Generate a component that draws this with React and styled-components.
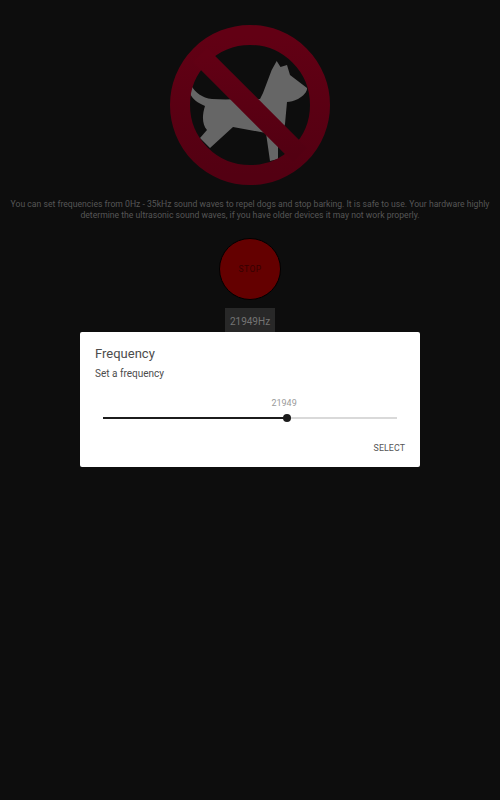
import React from "react";
import styled, { createGlobalStyle } from "styled-components";

const GlobalStyle = createGlobalStyle`
  html, body {
    margin: 0;
    padding: 0;
    background: #0d0d0d;
    font-family: Roboto, "Liberation Sans", sans-serif;
  }
`;

const Screen = styled.div`
  position: relative;
  width: 500px;
  height: 800px;
  overflow: hidden;
  background: #0d0d0d;
  display: flex;
  flex-direction: column;
  align-items: center;
  padding-top: 25px;
  box-sizing: border-box;
`;

const Logo = styled.svg`
  display: block;
  width: 160px;
  height: 160px;
`;

const Description = styled.p`
  margin: 14px 0 0;
  padding: 0 8px;
  font-size: 8.65px;
  line-height: 10.5px;
  text-align: center;
  color: #565656;
`;

const StopButton = styled.button`
  margin-top: 18px;
  width: 62px;
  height: 62px;
  padding: 0;
  border: 1.5px solid #000;
  border-radius: 50%;
  background: #640000;
  color: #340000;
  font-family: inherit;
  font-size: 8.5px;
  letter-spacing: 0.4px;
`;

const HzLabel = styled.div`
  margin-top: 8px;
  width: 50px;
  height: 30px;
  padding-top: 8px;
  box-sizing: border-box;
  background: #282828;
  color: #747474;
  font-size: 10px;
  line-height: 12px;
  text-align: center;
`;

const Dialog = styled.div`
  position: absolute;
  left: 80px;
  top: 332px;
  width: 340px;
  height: 135px;
  padding: 14px 15px 0;
  box-sizing: border-box;
  background: #fff;
  border-radius: 2px;
  display: flex;
  flex-direction: column;
`;

const Title = styled.h2`
  margin: 0;
  font-size: 13px;
  line-height: 15px;
  font-weight: 400;
  color: #4c4c4c;
`;

const Subtitle = styled.p`
  margin: 7px 0 0;
  font-size: 10px;
  line-height: 12px;
  color: #4c4c4c;
`;

const SliderWrap = styled.div`
  margin: 17px 8px 0;
  display: flex;
  flex-direction: column;
`;

const SliderValue = styled.div`
  align-self: flex-start;
  transform: translateX(-50%);
  margin-left: 61.6%;
  font-size: 9px;
  line-height: 12px;
  color: #9a9a9a;
`;

const Track = styled.div`
  position: relative;
  margin-top: 8px;
  height: 2px;
  background: #d9d9d9;
`;

const Fill = styled.div`
  height: 100%;
  background: #1c1c1c;
`;

const Thumb = styled.div`
  position: absolute;
  top: -3px;
  width: 8px;
  height: 8px;
  margin-left: -4px;
  border-radius: 50%;
  background: #1c1c1c;
`;

const Actions = styled.div`
  margin-top: 23px;
  display: flex;
  justify-content: flex-end;
`;

const SelectButton = styled.button`
  padding: 0;
  border: 0;
  background: none;
  font-family: inherit;
  font-size: 8.8px;
  line-height: 12px;
  letter-spacing: 0.1px;
  color: #555;
`;

const App = () => {
  const frequency = 21949;
  const percent = (frequency / 35000) * 100;

  return (
    <Screen>
      <GlobalStyle />
      <Logo viewBox="0 0 160 160">
        <defs>
          <linearGradient id="ring" x1="0" y1="0" x2="0" y2="1">
            <stop offset="0" stopColor="#620014" />
            <stop offset="1" stopColor="#530012" />
          </linearGradient>
        </defs>
        <path
          fill="#666"
          d="M21.5 61 C25 67 32 73 42 74 C55 75 70 74 90 74 L93 68 L101.700 45 L106.700 36 L110.500 42 L117 40 L120 50 L137 63 C137.500 66 134 71 128 74 C124 76 120 77 117 77 L115 99 L108 120 L108 134 L100 136 L96 108 L63 102 L40 123 L30 113 L37 105 C32 100 32 90 35 81 C28 78 22 74 20 68 Z"
        />
        <circle cx="80" cy="80" r="70" fill="none" stroke="url(#ring)" strokeWidth="20" />
        <line x1="30" y1="30" x2="130" y2="130" stroke="url(#ring)" strokeWidth="20" />
      </Logo>
      <Description>
        You can set frequencies from 0Hz - 35kHz sound waves to repel dogs and stop barking. It is safe to use. Your
        hardware highly determine the ultrasonic sound waves, if you have older devices it may not work properly.
      </Description>
      <StopButton>STOP</StopButton>
      <HzLabel>{frequency}Hz</HzLabel>

      <Dialog>
        <Title>Frequency</Title>
        <Subtitle>Set a frequency</Subtitle>
        <SliderWrap>
          <SliderValue>{frequency}</SliderValue>
          <Track>
            <Fill style={{ width: `${percent}%` }} />
            <Thumb style={{ left: `${percent}%` }} />
          </Track>
        </SliderWrap>
        <Actions>
          <SelectButton>SELECT</SelectButton>
        </Actions>
      </Dialog>
    </Screen>
  );
};

export default App;
